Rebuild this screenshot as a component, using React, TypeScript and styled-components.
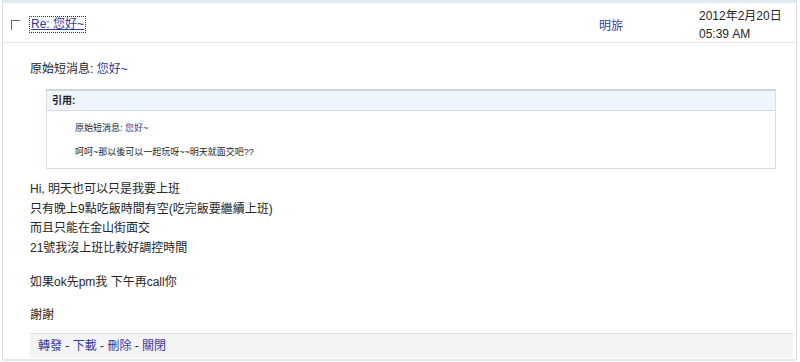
import React from 'react';
import styled, { createGlobalStyle } from 'styled-components';

const GlobalStyle = createGlobalStyle`
  html, body {
    margin: 0;
    padding: 0;
    background: #fff;
  }
  body {
    font-family: 'Liberation Sans', Arial, 'Noto Sans CJK TC', sans-serif;
    color: #262626;
  }
`;

const bodyLines = [
  'Hi, 明天也可以只是我要上班',
  '只有晚上9點吃飯時間有空(吃完飯要繼續上班)',
  '而且只能在金山街面交',
  '21號我沒上班比較好調控時間',
];

const actions = ['轉發', '下載', '刪除', '關閉'];

const App = () => {
  return (
    <>
      <GlobalStyle />
      <Frame>
        <HeaderRow>
          <CheckCell>
            <CheckBox />
          </CheckCell>
          <SubjectCell>
            <SubjectLink href="#">Re: 您好~</SubjectLink>
          </SubjectCell>
          <AuthorCell>
            <Link href="#">明旂</Link>
          </AuthorCell>
          <DateCell>
            2012年2月20日
            <br />
            05:39 AM
          </DateCell>
        </HeaderRow>

        <Content>
          <Original>
            原始短消息: <Link href="#">您好~</Link>
          </Original>

          <Quote>
            <QuoteTitle>引用:</QuoteTitle>
            <QuoteBody>
              <QuoteLine>
                原始短消息: <Link href="#">您好~</Link>
              </QuoteLine>
              <QuoteLine>呵呵~那以後可以一起玩呀~~明天就面交吧??</QuoteLine>
            </QuoteBody>
          </Quote>

          <Paragraph gap={11}>
            {bodyLines.map((line) => (
              <div key={line}>{line}</div>
            ))}
          </Paragraph>
          <Paragraph gap={15}>如果ok先pm我 下午再call你</Paragraph>
          <Paragraph gap={13}>謝謝</Paragraph>

          <Footer>
            {actions.map((a, i) => (
              <React.Fragment key={a}>
                {i > 0 && <Sep> - </Sep>}
                <Link href="#">{a}</Link>
              </React.Fragment>
            ))}
          </Footer>
        </Content>
      </Frame>
    </>
  );
};

const Frame = styled.div`
  margin: 0 2px 0 2px;
  width: 795px;
  height: 361px;
  box-sizing: border-box;
  border-top: 3px solid #e3ebf2;
  border-left: 1px solid #d6dde3;
  border-right: 1px solid #d6dde3;
  border-bottom: 2px solid #e3e8ec;
  display: flex;
  flex-direction: column;
`;

const HeaderRow = styled.div`
  display: grid;
  grid-template-columns: 27px 1fr 100px 97px;
  height: 39px;
  border-bottom: 1px solid #e1e7ec;
  font-size: 12px;
`;

const CheckCell = styled.div`
  display: flex;
  align-items: center;
  padding-left: 8px;
`;

const CheckBox = styled.span`
  display: block;
  width: 8px;
  height: 9px;
  margin-top: 4px;
  border-top: 1px solid #666;
  border-left: 1px solid #666;
`;

const SubjectCell = styled.div`
  display: flex;
  align-items: center;
`;

const Link = styled.a`
  color: #2f3a9e;
  text-decoration: none;
`;

const SubjectLink = styled(Link)`
  font-size: 12px;
  text-decoration: underline;
  outline: 1px dotted #333;
  padding: 0 1px;
  line-height: 15px;
  margin-top: 3px;
`;

const AuthorCell = styled.div`
  display: flex;
  align-items: center;
  padding-top: 3px;
`;

const DateCell = styled.div`
  padding-top: 4px;
  line-height: 18px;
`;

const Content = styled.div`
  padding: 17px 3px 0 27px;
  display: flex;
  flex-direction: column;
  font-size: 12px;
`;

const Original = styled.div`
  line-height: 18px;
`;

const Quote = styled.div`
  margin: 11px 17px 0 16px;
  border: 1px solid #d8dee3;
  border-top: 2px solid #cdd5db;
`;

const QuoteTitle = styled.div`
  height: 19px;
  line-height: 19px;
  padding-left: 5px;
  background: #eef5fb;
  border-bottom: 1px solid #d2dbe2;
  font-size: 10px;
  font-weight: bold;
  color: #222;
`;

const QuoteBody = styled.div`
  padding: 10px 0 9px 28px;
  display: flex;
  flex-direction: column;
  gap: 10px;
  font-size: 9px;
  line-height: 14px;
`;

const QuoteLine = styled.div``;

const Paragraph = styled.div<{ gap: number }>`
  margin-top: ${({ gap }) => gap}px;
  line-height: 19.5px;
`;

const Footer = styled.div`
  margin-top: 8px;
  height: 24px;
  line-height: 24px;
  padding-left: 8px;
  background: #f4f4f4;
  border-top: 1px solid #dedede;
  font-size: 12px;
`;

const Sep = styled.span`
  white-space: pre;
`;

export default App;
